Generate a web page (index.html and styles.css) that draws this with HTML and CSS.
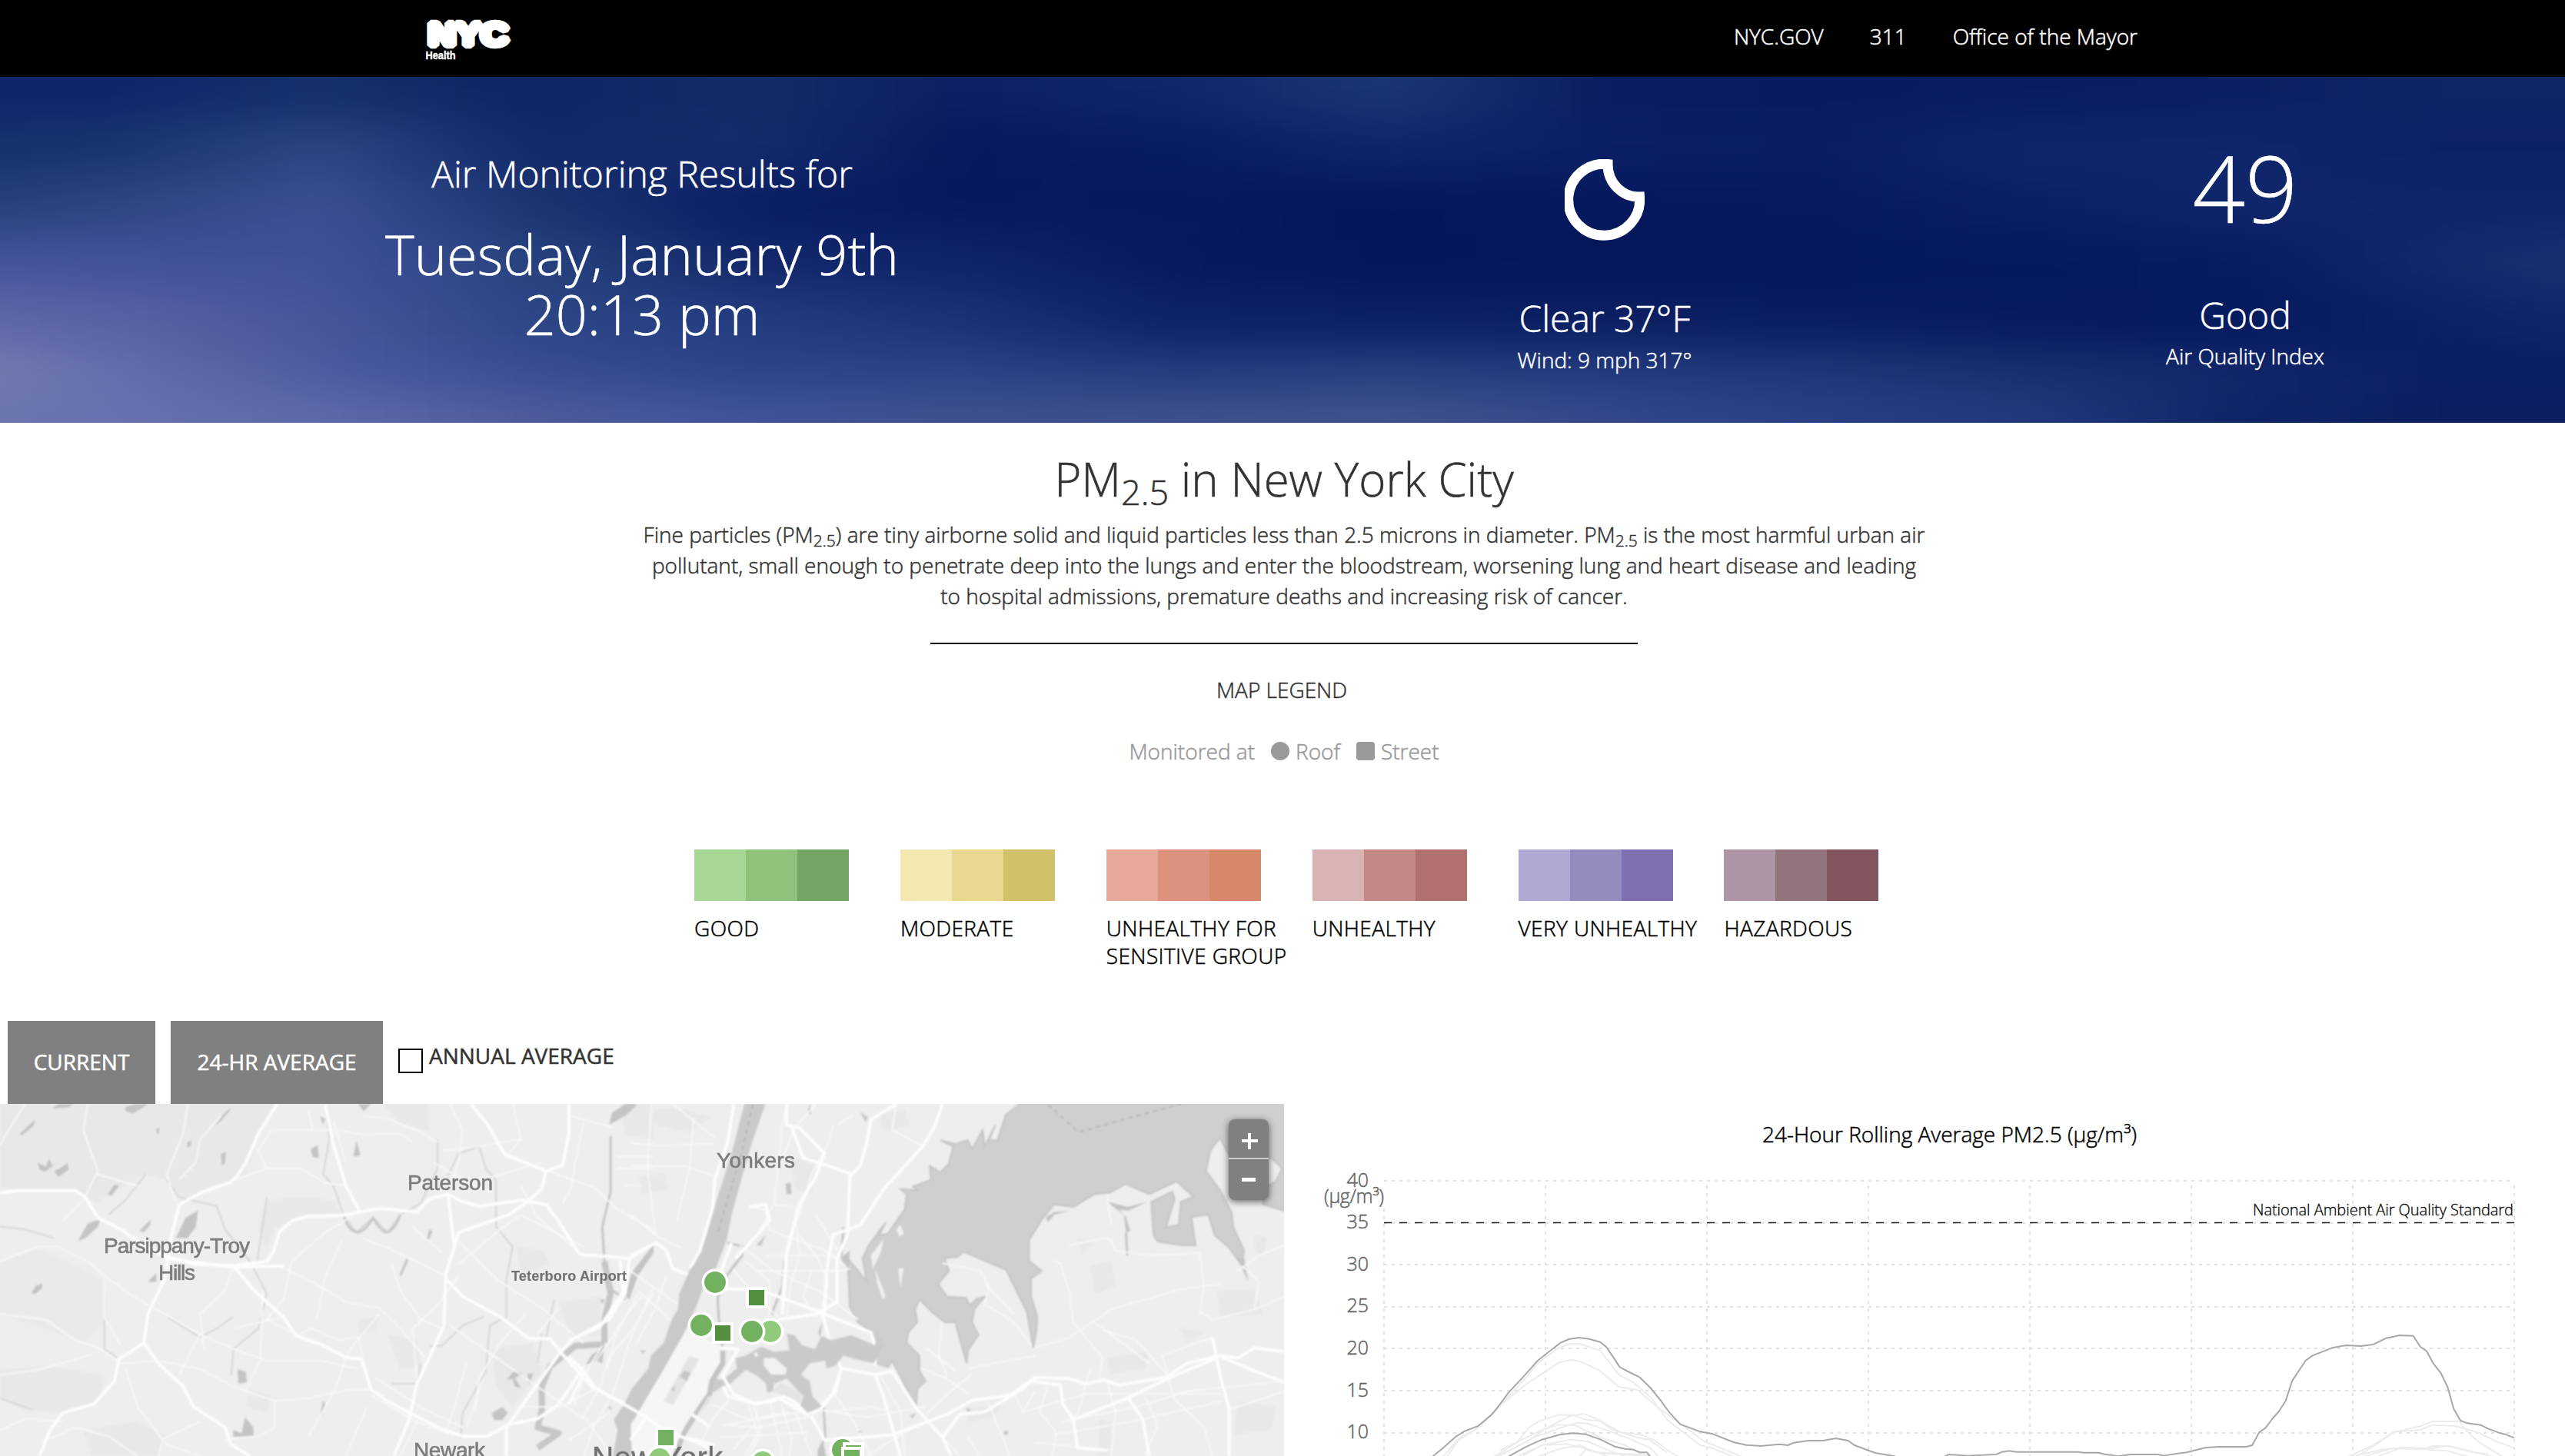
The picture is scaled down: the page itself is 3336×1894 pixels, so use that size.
FILE: index.html
```html
<!DOCTYPE html>
<html lang="en">
<head>
<meta charset="utf-8">
<title>NYC Air Monitoring</title>
<link rel="stylesheet" href="styles.css">
</head>
<body>
<header class="topbar">
  <svg class="logo" viewBox="0 0 116 60" width="116" height="60" aria-label="NYC Health">
    <text class="logo-mark" x="4" y="37.500" textLength="104" lengthAdjust="spacingAndGlyphs">NYC</text>
    <text class="logo-sub" x="0.500" y="55.500" textLength="39" lengthAdjust="spacingAndGlyphs">Health</text>
  </svg>
  <nav class="nav"><a>NYC.GOV</a><a>311</a><a>Office of the Mayor</a></nav>
</header>

<section class="hero">
  <div class="sky">
    <div class="band b1"></div><div class="band b2"></div><div class="band b3"></div><div class="band b4"></div>
    <div class="band b5"></div><div class="band b6"></div><div class="band b7"></div>
  </div>
  <div class="col date">
    <p class="lead">Air Monitoring Results for</p>
    <p class="when">Tuesday, January 9th<br>20:13 pm</p>
  </div>
  <div class="col weather">
    <svg class="moon" viewBox="0 0 104 106" width="104" height="106"><path d="M56 6.500A46.500 46.500 0 1 0 97.500 49C76 50 56 32 56 6.500Z" fill="none" stroke="#fff" stroke-width="13"/></svg>
    <p class="lead">Clear 37°F</p>
    <p class="small">Wind: 9 mph 317°</p>
  </div>
  <div class="col aqi">
    <p class="index">49</p>
    <p class="lead">Good</p>
    <p class="small">Air Quality Index</p>
  </div>
</section>

<main>
  <section class="intro">
    <h1>PM<sub>2.5</sub> in New York City</h1>
    <p class="about">Fine particles (PM<sub>2.5</sub>) are tiny airborne solid and liquid particles less than 2.5 microns in diameter. PM<sub>2.5</sub> is the most harmful urban air<br>pollutant, small enough to penetrate deep into the lungs and enter the bloodstream, worsening lung and heart disease and leading<br>to hospital admissions, premature deaths and increasing risk of cancer.</p>
    <hr>
    <p class="legend-title">MAP LEGEND</p>
    <p class="sites"><span class="at">Monitored at</span><i class="dot"></i><span class="roof">Roof</span><i class="sq"></i><span>Street</span></p>
  </section>

  <section class="scale">
    <div class="level good"><div class="sw"><i></i><i></i><i></i></div><p>GOOD</p></div>
    <div class="level moderate"><div class="sw"><i></i><i></i><i></i></div><p>MODERATE</p></div>
    <div class="level sensitive"><div class="sw"><i></i><i></i><i></i></div><p>UNHEALTHY FOR<br>SENSITIVE GROUP</p></div>
    <div class="level unhealthy"><div class="sw"><i></i><i></i><i></i></div><p>UNHEALTHY</p></div>
    <div class="level very"><div class="sw"><i></i><i></i><i></i></div><p>VERY UNHEALTHY</p></div>
    <div class="level hazard"><div class="sw"><i></i><i></i><i></i></div><p>HAZARDOUS</p></div>
  </section>

  <section class="tabs">
    <button class="tab current">CURRENT</button>
    <button class="tab day">24-HR AVERAGE</button>
    <label class="annual"><i class="box"></i><span>ANNUAL AVERAGE</span></label>
  </section>

  <section class="panels">
    <div class="map">
      <svg viewBox="0 1436 1670 458" width="1670" height="458">
        <defs>
          <pattern id="grid" width="9" height="9" patternUnits="userSpaceOnUse" patternTransform="rotate(30)"><rect width="9" height="9" fill="#efefef"/><path d="M0 0H9M0 0V9" stroke="#fff" stroke-width="4"/></pattern>
          <filter id="soft" x="-5%" y="-5%" width="110%" height="110%"><feGaussianBlur stdDeviation="0.900"/></filter>
        </defs>
        <rect x="0" y="1436" width="1670" height="458" fill="#eeeeee"/>
        <g filter="url(#soft)">
        <!-- west side: New Jersey -->
        <g transform="translate(0 1300) scale(.5421 .3788)">
          <g class="park">
            <path d="M0 350H660L620 460L600 560L540 620L440 690L400 620L350 600L300 640L230 700L180 650L0 650Z"/>
            <path d="M640 690L720 680L800 690L820 740L720 740L660 790L640 860L620 790Z"/>
            <path d="M0 900L80 850L160 900L250 960L260 1100L200 1180L60 1110L0 1080Z" opacity=".6"/>
            <path d="M0 1270L120 1260L250 1290L240 1380L150 1420L60 1410L0 1370Z"/>
            <path d="M920 360H1030V450L960 430Z"/><path d="M480 560L560 540L600 600L540 640Z"/>
            <path d="M1340 1040L1440 1020V1150L1370 1160Z"/><path d="M1180 1200L1280 1180L1300 1280L1230 1400L1190 1330Z"/>
            <path d="M930 1150L1000 1170L1010 1260L960 1270Z"/><path d="M1240 850L1300 860L1320 910L1250 950Z"/>
            <path d="M600 1340L650 1360L640 1420L590 1400Z"/><path d="M860 1100L910 1090L900 1140L860 1150Z"/>
            <path d="M200 1480L330 1450L400 1500L380 1568H220Z"/><path d="M1490 360H1568V480L1500 470Z"/>
          </g>
          <g fill="#c4c4c4">
            <path d="M300 370L325 360H355L320 392L302 385Z"/><path d="M125 375L140 360H175L165 370Z"/><path d="M47 462L85 412L80 435L52 468Z"/>
            <path d="M90 560L110 575L118 545L125 570L138 560L108 592L95 585Z"/><path d="M130 590L150 575L162 560L165 585L140 610Z"/>
            <path d="M258 670L275 635L285 640L268 675Z"/><path d="M422 820L445 750L475 725L470 780L450 820Z"/>
            <path d="M187 830L210 770L240 755L235 780L205 820Z"/><path d="M335 795L362 755L360 775L345 800Z"/>
            <path d="M530 530L542 525L540 560L532 570Z"/><path d="M450 490L460 485L457 505L448 508Z"/><path d="M515 435L535 395L555 370L550 385L525 425Z"/>
            <path d="M848 540L855 485L865 535Z"/><path d="M745 515L762 500L765 545L750 540Z"/><path d="M768 402L780 410L775 430Z"/>
            <path d="M75 1010L85 985L100 975L102 990L85 1012Z"/><path d="M355 970L375 940V970Z"/>
            <path d="M958 948L975 890L980 895L963 950Z"/><path d="M1024 825L1030 790L1038 795L1028 828Z"/>
            <path d="M570 1270L590 1280L592 1315L572 1320Z"/><path d="M560 1480L580 1490L588 1435L608 1470V1500L560 1502Z"/>
            <path d="M768 1425L775 1380L780 1385L773 1428Z"/><path d="M1215 1305L1235 1275L1255 1285L1235 1300L1250 1335L1235 1330L1230 1305Z"/>
            <path d="M1180 1420L1205 1400L1218 1420L1205 1445H1185Z"/><path d="M1462 430L1468 390L1500 360H1530L1500 400Z"/>
            <path d="M860 360H890L872 385Z"/><path d="M1405 1255L1420 1220L1450 1190L1445 1250L1430 1240Z"/><path d="M375 445L382 440V460L376 462Z"/>
            <path d="M1265 1285H1280L1270 1320Z"/><path d="M1500 1020L1515 940L1568 840V870L1530 950L1510 1030Z"/>
          </g>
          <g class="stream">
            <path d="M1050 480V580L1010 700L960 740L930 800L895 750L855 800L825 745L800 640L775 600L790 480L780 360"/>
            <path class="wide" d="M960 740Q945 800 925 800Q910 790 895 750Q875 800 855 800Q835 790 825 745"/>
            <path d="M1075 605L1100 530L1150 505L1165 580L1190 620V780L1230 850L1215 960V1090L1175 1120L1165 1280L1110 1420L1105 1510"/>
            <path class="wide" d="M1465 470V660L1445 780L1450 900L1470 1000L1500 1030"/>
            <path class="wider" d="M1450 1180V1100L1465 1010L1450 900M1450 1185L1380 1190L1320 1260L1300 1330V1410L1290 1470L1340 1490L1290 1540"/>
            <path d="M350 600L300 690L260 740M400 620L430 680L520 710L540 790L600 900L640 1010L620 1130L560 1200L555 1290"/>
            <path d="M640 680L630 780L615 920M250 1100V1200L280 1230M0 780L60 790L130 820M400 1090L480 1160L520 1130L560 1090"/>
            <path d="M1160 1090L1110 1120L1060 1190L1030 1190M1310 1160L1330 1030M1290 1250L1300 1150M0 1370L80 1410M940 1320H1000L1010 1250"/>
          </g>
          <g class="street">
            <path d="M210 360L200 450L235 590L200 690L150 760M450 360L440 460L400 600L420 690M530 400L480 480L470 560L430 620"/>
            <path d="M0 900L90 850L140 850L210 900L270 970L320 1020L430 1110L480 1150L560 1200L640 1240L770 1240L860 1270"/>
            <path d="M0 1080L110 1100L180 1170L240 1200L290 1250L380 1240L480 1270L560 1330L660 1380L740 1370L840 1340L890 1340"/>
            <path d="M0 1290L100 1270L220 1220M300 1260L330 1400L400 1530L480 1568M480 1150L430 1290"/>
            <path d="M650 450H820L870 465L960 460L990 490M650 450L620 520L640 580L720 580L780 630L830 640M740 380L750 450M800 420L830 560"/>
            <path d="M870 400L930 410L1000 450L1050 490M1060 520L1170 500L1250 480M1180 610L1300 560M1040 560L1110 620L1180 660"/>
            <path d="M710 1150L640 1100L680 1030L700 900L780 800L850 740M660 910L750 970L830 1040L910 1060L960 1130L1020 1230"/>
            <path d="M560 920L540 1000L480 1080L490 1200M630 1000L625 1240L590 1340M700 1160L750 1130L810 1170L860 1160L870 1220"/>
            <path d="M870 820L940 860L1000 900L1070 950M1100 830L1150 900L1200 970L1300 1060L1400 1180M1100 910L1200 790L1250 740L1400 850"/>
            <path d="M1210 540L1320 590L1430 650L1480 720L1568 790M1250 640L1290 750L1400 880M1400 420L1380 560L1370 650L1350 700"/>
            <path d="M1370 400L1470 440M1230 360L1250 480L1220 530M1080 360L1110 450L1100 560L1080 650M1480 540H1568M1480 580H1568M1500 640H1568"/>
            <path d="M1100 950L1050 1050L990 1130L1000 1300M1080 1120L1180 1220L1280 1320L1400 1440M910 1080L840 1200L800 1350L740 1500"/>
            <path d="M890 1360L1000 1450L1090 1500M900 1300L1010 1400L1110 1470M880 1400L830 1568M1000 1450L960 1568M660 1380V1470L620 1500L540 1510"/>
            <path d="M380 1568L390 1510L480 1450M0 1480L60 1440L150 1450M100 1520L180 1470L260 1500L330 1568M680 1090L560 1130M230 600L330 640"/>
            <path d="M1568 1010L1520 1130L1460 1230L1440 1330L1400 1430M1530 1010L1490 1120L1430 1240M1400 1430L1470 1568M1440 1330L1340 1400L1240 1400"/>
            <path d="M940 910L960 1000L1010 1100L1060 1130M820 830L780 950L760 1100M990 780L1060 870M1120 1240L1090 1400L1070 1480M1160 1300L1120 1470"/>
            <path d="M60 360L20 450L0 500M250 960V1090L290 1190M530 640L600 600L640 580M1260 1080L1200 1180L1150 1300L1140 1420M1340 1060L1290 1150"/>
          </g>
          <g class="road">
            <path d="M0 665L40 657H180L205 680L235 750L290 790L350 850L400 885L470 910L560 915L640 900L655 870L670 800L700 760L740 745L820 742L910 718L1000 730L1030 685L1075 670L1110 695L1150 710L1250 690L1310 705L1340 760L1390 875L1510 890L1568 840"/>
            <path d="M665 360L620 460L590 560L570 605L550 630L480 665L430 705L410 820L395 960L355 1080L345 1180L285 1235L275 1310L225 1390L150 1420L120 1480L95 1568"/>
            <path d="M345 1180L380 1250L440 1330L465 1400L540 1470L555 1530L600 1568"/>
            <path d="M560 915L610 1000L680 1090L710 1155L770 1185L830 1230L868 1235L890 1340L930 1380L1050 1470L1110 1500L1170 1500L1220 1460L1290 1440L1340 1390L1370 1330L1400 1260"/>
            <path d="M780 360L800 500L830 640L865 735"/>
            <path d="M1130 360L1170 430L1210 530L1310 590L1350 570L1365 460V360"/>
            <path d="M1310 590L1300 650L1270 690L1220 740L1100 800L1090 850L1070 940L1065 1120L1030 1230L1000 1320L980 1450L945 1568M1075 670L1090 850"/>
            <path d="M1070 960L1110 1020L1200 1090L1270 1165L1320 1165L1350 1220L1420 1330L1568 1440"/>
            <path d="M1510 890L1500 1010L1460 1100L1370 1170L1340 1220L1260 1380L1215 1470V1568M400 890L560 920L680 915"/>
          </g>
        </g>
        <!-- east side: Hudson, Bronx, Long Island Sound -->
        <g transform="translate(820 1420) scale(.5485 .3333)">
          <g class="park">
            <path d="M20 80L100 60L190 100L140 160L60 130Z"/><path d="M20 330L80 320L90 380L30 400Z"/><path d="M380 260L440 270L430 400L390 380Z"/>
            <path d="M590 90L650 70L660 130L600 160Z"/><path d="M1090 680L1140 660L1150 760L1100 790Z"/><path d="M1390 780L1480 770L1500 870L1400 880Z"/>
            <path d="M1130 1040L1230 1010L1220 1080L1140 1100Z"/><path d="M1440 1210L1530 1230L1520 1320L1430 1340Z"/><path d="M1300 920L1360 940L1320 980Z"/>
            <path d="M1110 1280L1140 1290V1422H1110Z"/><path d="M1060 570L1100 590L1070 640Z"/><path d="M800 1240L880 1220L860 1270L800 1290Z"/><path d="M1480 560L1510 570L1500 640L1480 620Z"/>
          </g>
          <path fill="#cacaca" d="M270 48L240 240L205 420L180 560L145 700L130 760L200 760L200 700L228 580L240 480L265 330L290 190L320 48Z"/>
          <path fill="#cfcfcf" stroke="#c4c4c4" stroke-width="2" vector-effect="non-scaling-stroke" d="M930 40L890 90L870 190L850 190L865 130L840 215L835 150L810 225L800 190L770 205L735 190L765 215L755 280L735 315L710 290L712 345L670 370L680 385L640 380L655 400L650 460L610 555L590 560L605 510L565 600L550 650L560 740L530 680L515 650L520 840L540 900L565 930L580 990V1060L610 1075L620 1050L640 1110L660 1180L678 1220L680 1160L700 1130L685 1090V1030L655 980L658 940L680 900L675 850L685 810L715 860L745 900L770 900L780 960L797 1060L800 1010L825 950L810 900L815 850L840 800L820 810L805 835L795 805L750 800L730 750L755 700L745 650L775 645L790 625L840 660L890 695L910 760L940 860L955 1000L962 940L965 880L950 800V730L975 700L945 660V580L975 500L1005 440L1050 450L1100 400L1135 395L1175 360L1230 400L1295 350L1335 410L1305 430L1300 520L1270 530L1290 420L1285 390L1235 430L1240 560L1250 585L1310 600L1340 600L1330 490L1370 480L1385 560L1420 610L1450 680L1455 620L1430 530L1425 470L1400 390L1365 310L1375 230L1398 180L1420 250L1520 260L1545 300L1530 350L1500 380L1500 440L1560 470V40Z"/>
          <path fill="#c4c4c4" d="M1225 430L1180 465L1160 460L1175 490L1185 545L1175 550L1170 480L1130 430L1180 450ZM990 510L1005 480L1040 465L1005 470L985 490ZM368 360L380 355L382 400L370 400ZM298 600L320 560L310 600ZM545 80L562 100L558 120ZM1440 650L1455 650L1465 740L1450 690ZM425 48L428 90L420 80ZM505 640L520 620L518 680H505ZM445 940L455 900L450 960ZM795 1235L810 1240L800 1250ZM885 1325H895V1338H885Z"/>
          <path fill="#f0f0f0" d="M630 540L640 520L648 555L638 565ZM570 640L600 575L595 620L575 690ZM580 690L605 800L598 812L585 750ZM635 690L648 690L640 765Z"/>
          <g class="ferry"><path d="M290 50L265 230L205 560"/><path d="M990 50L1062 158L1310 45"/></g>
          <g class="stream"><path class="wide" d="M230 590L268 605L265 640L240 690M505 530L500 640L510 680M458 1230L462 1350L450 1390L460 1422M1175 550L1178 640M365 660L360 760L335 870"/></g>
          <g class="street">
            <path d="M0 200L60 210L200 205M100 48L200 180M50 48L40 300L60 560M150 100L140 300L110 500M0 290L130 290L200 330M0 480L60 560L120 610M0 700L130 850M20 780L100 900"/>
            <path d="M440 48L390 140L350 300L340 440L300 560L250 650M370 48L360 130L350 300M480 130L470 200L430 320L400 480L370 600L360 780M530 90L490 130M630 48L620 150L690 210"/>
            <path d="M340 440L390 450L400 640L380 760L370 880M280 450L320 460L330 540L460 620L510 680M300 700H500L520 690M320 640L500 640M240 690L300 800L350 880"/>
            <path d="M260 600L340 700L450 780L540 890M400 560L440 640L470 740L450 860M440 480L490 620M210 770H300L400 830M270 660L330 740L330 870M430 700L410 800L430 860"/>
            <path d="M740 670L830 700L850 760L840 830L910 900L950 990M1000 660L1020 670L1040 780L1050 900L1080 960M960 1000L1040 960L1140 850L1310 770L1400 750"/>
            <path d="M1140 570L1150 620L1230 640L1350 630M1040 600L1130 570L1150 610M1350 630L1360 760L1350 860L1380 890L1480 850L1550 800M1450 680L1490 740L1480 850"/>
            <path d="M800 1080L960 1030M810 1100L760 1170L700 1260M690 1080L750 1120L800 1180M740 900L730 1020L750 1110M1080 960L1120 1040L1110 1130M1120 930L1200 970L1270 1100"/>
            <path d="M990 1150L970 1250L1010 1330L1000 1422M1090 1080L1060 1260L1040 1280M1130 1130L1150 1250L1140 1422M1270 1100L1290 1200L1360 1310L1380 1422M1220 1190L1250 1300L1220 1422"/>
            <path d="M1020 1290L1200 1230L1320 1170L1550 1130M930 1250L1080 1180H1400M1000 1340L1180 1290L1400 1210M1420 1240L1550 1170M700 1290L640 1340L560 1422M850 1220L900 1422M910 1170L930 1250L960 1170"/>
            <path d="M290 1220L310 1310L270 1422M330 1200L360 1422M380 1200L430 1422M230 1300L440 1240L560 1270L700 1230M210 1350L420 1330M480 1170L530 1290L570 1422M590 1100L640 1250L650 1422"/>
            <path d="M720 1310L780 1422M960 1370L1140 1400M800 1350L830 1422M1380 960L1260 1030L1280 1130M1130 400L1140 520M840 750L910 870M1100 900L1230 1060M700 1000L770 1090M1550 600L1490 640L1440 700"/>
          </g>
          <g class="road">
            <path d="M245 48L230 200L200 340L195 450L165 620L140 690M370 48V130L400 140L460 240L440 330L400 440L370 640L360 870"/>
            <path d="M630 48L570 110L560 200L545 290L520 330L515 560L490 650L490 820L450 860M380 130L410 260L470 290L520 320M740 48L720 140L690 220L600 380L545 520L480 560L465 700L460 860"/>
            <path d="M0 640L60 590L85 620L100 690L170 735M200 770H300L450 860M350 890L455 865L540 920L570 940L580 990V1070M455 865L470 960L500 1080L580 1105L620 1090L680 1240L740 1350L760 1422"/>
            <path d="M500 1080L480 1180L430 1260L350 1195L300 1220L230 1190L215 1130M350 1195L430 1270L460 1360L500 1355L620 1340L750 1260L810 1205L900 1185L960 1115L1040 1120L1080 1140L1120 1125L1160 1145L1270 1115L1320 1060L1400 1030L1440 1040L1480 1000L1550 1015"/>
            <path d="M1400 1035L1480 1090L1550 1135M1380 960L1400 1120L1420 1240V1422M740 1350L780 1260L840 1250L930 1160L950 1130L1020 1145L1025 1220L1050 1280L1180 1195L1280 1115L1390 1040M1180 1195L1215 1280L1230 1422M1050 1280L1060 1390L1130 1400"/>
            <path d="M0 1240L60 1300L130 1350L200 1380M240 590L215 700L200 770"/>
            <path d="M580 1105L600 1190L640 1422M280 450L320 440L330 500L300 560L250 650"/>
          </g>
        </g>
        <!-- Manhattan and the East River -->
        <g transform="translate(740 1640) scale(.33333)">
          <path fill="#c9c9c9" d="M482 20L470 40L430 130L425 190L400 230L370 320L320 370L310 420L245 500L215 560L175 620L190 660L170 770H245L240 640L260 610L300 540L360 440L440 300L460 260L500 170L540 60L570 0Z"/>
          <path fill="url(#grid)" d="M470 260L590 340L600 400L540 470V520L450 640L410 770H248L244 640L262 610L302 540L362 440L440 300Z"/>
          <path fill="#e4e4e4" d="M470 370L508 385L405 565L370 548Z"/>
          <path fill="#c6c6c6" d="M432 450L450 430L475 435L460 470ZM400 505L412 485V512Z"/>
          <path fill="#cacaca" d="M1200 280L1195 330L1100 290L1025 310L985 295L960 345L910 330L880 290L850 285L860 350L800 355L750 335L690 370L650 380L655 420L600 465L570 460L560 515L600 490L630 480L690 425L735 450L770 480L772 515L795 510L800 480L850 460L915 530L900 570L940 605L990 570L950 530L940 470L905 445L940 400L1000 390L1005 420L1040 410L1070 370L1120 385L1190 400L1230 330Z"/>
          <path fill="#f0f0f0" d="M760 380L800 378L850 420L845 445L790 445L760 410ZM722 360L732 355L738 370L728 378Z"/>
          <path fill="#e4e4e4" d="M790 510L830 475L915 525L905 555L850 530Z"/>
          <path d="M600 350V400L560 465L548 520L500 590L450 670L410 770" fill="none" stroke="#c4c4c4" stroke-width="20"/>
          <path d="M545 540L490 620M660 0L600 80L580 150L585 230L600 340" fill="none" stroke="#c4c4c4" stroke-width="9"/>
          <path d="M548 530L500 610" fill="none" stroke="#f0f0f0" stroke-width="6"/>
          <path fill="#c4c4c4" d="M970 740L990 700L1005 770H970ZM120 152L140 150L130 170ZM275 350H300L290 362ZM150 570H165V582ZM1330 605L1355 595L1340 615ZM1125 665H1145L1135 672Z"/>
          <g class="road"><path d="M0 375L60 435L100 495L215 560L300 610L370 660M200 0L212 120L120 260L0 310M60 435L0 560M590 340L660 345L600 450L640 520L720 555L790 550L840 530L880 550L930 600L980 580L1040 510L1060 430M300 610L240 700M420 680L500 710L560 740M480 600L550 650"/></g>
          <g class="street"><path d="M130 330L70 430L20 560M330 100L230 330L180 500L100 640L60 762M280 140L190 260L150 420M0 700L90 640L160 590M380 60L330 200L260 330M700 560L740 690L700 762M740 570L720 640L640 740M560 560L700 620L860 590M830 560L870 700L860 762M600 640L740 650L930 610M640 520L560 620L520 700M1000 590L1180 570L1260 590"/></g>
        </g>
        </g>
        <g class="place">
          <text x="530" y="1548" textLength="111">Paterson</text>
          <text x="135" y="1630" textLength="190">Parsippany-Troy</text>
          <text x="206" y="1665" textLength="48">Hills</text>
          <text x="932" y="1519" textLength="102">Yonkers</text>
          <text x="538" y="1896" textLength="93">Newark</text>
          <text class="airport" x="665" y="1666" textLength="150">Teterboro Airport</text>
          <text class="city" x="770" y="1909" textLength="170">New York</text>
        </g>
        <g stroke="#fff" stroke-width="3.500">
          <circle class="lo" cx="1002" cy="1732" r="15.700"/><circle class="mid" cx="978" cy="1732" r="15.700"/>
          <circle class="mid" cx="930" cy="1668" r="15.700"/><circle class="mid" cx="912" cy="1724" r="15.700"/>
          <circle class="lo" cx="858" cy="1898" r="15.700"/><circle class="lo" cx="992" cy="1902" r="15.700"/><circle class="mid" cx="1096" cy="1886" r="15.700"/>
        </g>
        <g stroke="#fff" stroke-width="4">
          <rect class="hi" x="972" y="1676" width="24" height="24"/><rect class="hi" x="928" y="1722" width="24" height="24"/>
          <rect class="mid" x="854" y="1858" width="24" height="24"/><rect class="mid" x="1098" y="1878" width="24" height="24"/><rect class="mid" x="1096" y="1884" width="24" height="24"/>
        </g>
      </svg>
      <div class="zoom"><b class="plus"></b><b class="minus"></b></div>
    </div>

    <svg class="chart" viewBox="1670 1436 1666 458" width="1666" height="458">
      <text class="chart-title" x="2292" y="1486" textLength="487">24-Hour Rolling Average PM2.5 (µg/m³)</text>
      <g class="gh"><path d="M1800 1536H3266M1800 1591H3266M1800 1645H3266M1800 1700H3266M1800 1754H3266M1800 1809H3266M1800 1864H3266"/></g>
      <g class="gv"><path d="M1800 1572V1894M2010 1542V1894M2220 1542V1894M2430 1542V1894M2640 1542V1894M2850 1542V1894M3060 1542V1894M3270 1542V1894"/></g>
      <path d="M1800 1590.500H3270" stroke="#222" stroke-width="1.500" stroke-dasharray="10 10"/>
      <g class="axis">
        <text x="1780" y="1544">40</text><text x="1780" y="1598">35</text><text x="1780" y="1653">30</text><text x="1780" y="1707">25</text><text x="1780" y="1762">20</text><text x="1780" y="1817">15</text><text x="1780" y="1871">10</text>
        <text x="1800" y="1565" textLength="78">(µg/m³)</text>
      </g>
      <text class="naaqs" x="2930" y="1580.500" textLength="339">National Ambient Air Quality Standard</text>
      <g class="line" transform="translate(1680 1430) scale(.5421 .33333)">
        <g class="faint">
          <path d="M360 1400L400 1325L450 1280L490 1210L560 1090L590 1030L640 970L665 954L690 954L740 980L785 1075L820 1105L865 1170L900 1250L980 1350L1010 1362L1060 1395"/>
          <path d="M370 1400L400 1330L445 1285L500 1195L560 1115L640 1028L672 1016L700 1028L738 1058L785 1122L830 1135L880 1205L940 1275L990 1335L1080 1395"/>
          <path d="M480 1400L540 1340L570 1280L595 1255L640 1232H675L705 1250L740 1255L790 1300L840 1310L870 1330L910 1380L930 1395"/>
          <path d="M490 1395L560 1340L620 1275L670 1235L700 1228L730 1245L770 1290L830 1320L860 1330L900 1378"/>
          <path d="M500 1390L580 1320L640 1285L685 1262L710 1265L770 1300L810 1325L860 1360L880 1395"/>
          <path d="M500 1370L600 1290L640 1270L680 1272L740 1320L800 1350L850 1395"/>
          <path d="M540 1395L600 1350L670 1328L710 1335L760 1370L800 1395M590 1395L640 1365L690 1350L730 1378L860 1388M690 1395L705 1368L740 1380L870 1395M555 1390L600 1350L660 1345L720 1370L760 1395"/>
        </g>
        <path d="M338 1394L360 1365L395 1315L415 1295L447 1275L480 1230L495 1200L520 1145L560 1075L590 1020L625 975L645 950L665 936L690 930L715 936L740 947L755 967L775 1015L787 1045L810 1065L835 1085L860 1125L885 1175L905 1220L932 1268L980 1297L1010 1306L1060 1338L1090 1349L1125 1353L1170 1346L1190 1350L1205 1340L1240 1332H1275L1305 1323L1335 1332L1350 1350L1400 1380L1450 1394"/>
        <path d="M520 1394L560 1358L600 1328L645 1308L675 1303L705 1307L740 1327L775 1355L800 1364L820 1367L835 1378H852L860 1394"/>
      </g>
      <g class="line" transform="translate(2500 1430) scale(.5332 .33333)">
        <g class="faint">
          <path d="M1040 1394L1100 1350L1150 1300L1215 1276L1245 1257H1310L1325 1290L1360 1340L1415 1394"/>
          <path d="M1060 1394L1100 1355L1150 1298L1215 1290L1245 1271L1300 1275L1360 1303L1400 1335L1444 1360"/>
          <path d="M1075 1394L1150 1362L1220 1366L1280 1372L1330 1394M1110 1394L1165 1363L1225 1365L1245 1353L1285 1353L1330 1370L1390 1394M1050 1394L1125 1366L1180 1358L1240 1363L1280 1352L1350 1380L1380 1382"/>
        </g>
        <path d="M55 1394L65 1386L110 1391L180 1386L195 1376L212 1372L230 1376H380L395 1379H430L445 1385L478 1393L508 1386H575L590 1391L620 1383L645 1378L690 1360L720 1356H790L805 1350L822 1300L837 1283L855 1245L870 1218L887 1175L902 1100L935 1020L952 1000L1000 970L1035 960L1070 963L1100 957L1132 932L1165 921L1198 923L1215 966L1230 982L1247 1032L1265 1068L1282 1125L1296 1207L1313 1254L1330 1264L1362 1271L1380 1285L1410 1303L1425 1309L1444 1321"/>
      </g>
    </svg>
  </section>
</main>
</body>
</html>
```
FILE: styles.css
```css
* { box-sizing: border-box; }
body { margin: 0; width: 3336px; height: 1894px; overflow: hidden; background: #fff; color: #333; font: 300 28px/40px "Open Sans", sans-serif; -webkit-text-stroke-width: .5px; }
p, h1 { margin: 0; font-weight: 300; }
sub { font-size: 75%; line-height: 0; position: relative; bottom: -.25em; vertical-align: baseline; }

.topbar { height: 100px; padding: 0 556px 4px 553px; border-bottom: 2px solid #090909; background: #000; display: flex; align-items: center; justify-content: space-between; }
.logo { align-self: flex-start; margin-top: 21px; -webkit-text-stroke-width: 0; }
.logo-mark { font: bold 42px "Liberation Sans", sans-serif; fill: #fff; stroke: #fff; stroke-width: 8.5px; stroke-linejoin: bevel; }
.logo-sub { font: bold 14px "Liberation Sans", sans-serif; fill: #fff; stroke: #fff; stroke-width: .4px; }
.nav { display: flex; gap: 60px; color: #fff; }

.hero { position: relative; height: 450px; overflow: hidden; display: grid; grid-template-columns: 1670px 834px 832px; color: #fff; text-align: center; }
.sky { position: absolute; inset: -100px -139px; filter: blur(26px); }
.band { height: 74px; }
.b1 { height: 157px; background: linear-gradient(90deg, #10256a, #10256a, #14306c, #0f2465, #142c6a, #0c1f62, #10276a, #1b3674, #0a1d60, #091b60, #091c60, #0b1f62, #0f2565, #0f2565); }
.b2 { background: linear-gradient(90deg, #14306c, #183570, #2c4684, #13296a, #152c6c, #07195c, #081c60, #10256a, #0b1f64, #0a1d62, #10266a, #10266a, #0c2064, #0c2064); }
.b3 { background: linear-gradient(90deg, #1f3d78, #2f4583, #3c4f92, #1b3572, #0a1e64, #07195e, #061860, #041659, #05185c, #071a5e, #0b1f64, #10266a, #10256a, #10256a); }
.b4 { background: linear-gradient(90deg, #4a569c, #43529a, #40509a, #28437f, #14296b, #10246a, #081a5e, #041659, #04175b, #04175b, #051a5e, #081c60, #132b6c, #1a3775); }
.b5 { background: linear-gradient(90deg, #626aaa, #5a62a6, #485599, #2d4686, #243d80, #1a3375, #0e2266, #0c2064, #0b1f62, #0a1d62, #071a5e, #061a5e, #0c2266, #132b6c); }
.b6 { height: 60px; background: linear-gradient(90deg, #8088b0, #6670ac, #4c5ba0, #3b4c92, #2c4588, #2a4486, #243c7e, #24407f, #233c7e, #1e3878, #18306f, #12286a, #0a1e62, #0a1e62); }
.b7 { height: 138px; background: linear-gradient(90deg, #6c76ae, #6872ae, #5e6aac, #4f5b9d, #42549a, #3f508f, #40508f, #43528f, #35488c, #2a4086, #23397c, #0f2466, #0a1e60, #0a1e60); }
.col { position: relative; display: flex; flex-direction: column; align-items: center; }
.lead { font-size: 48px; line-height: 60px; }
.small { margin-top: 4px; }
.date { padding-top: 96px; }
.when { margin-top: 35px; font-size: 72px; line-height: 78px; }
.weather { padding-top: 107px; }
.moon { margin-bottom: 71px; }
.index { margin: 84px 0 76px; font-size: 120px; line-height: 120px; }
.aqi .small { margin-top: 3px; }

.intro { padding-top: 31px; width: 3340px; text-align: center; }
.intro h1 { font-size: 60px; line-height: 84px; }
.about { margin-top: 10px; }
.intro hr { width: 920px; height: 2px; margin: 41px auto 39px; border: 0; background: #000; }
.legend-title { padding-right: 6px; }
.sites { margin-top: 40px; display: flex; justify-content: center; align-items: center; color: #999; }
.dot, .sq { width: 24px; height: 24px; background: #999; margin-right: 8px; }
.dot { border-radius: 50%; margin-left: 21px; }
.sq { border-radius: 4px; margin-left: 21px; }

.scale { margin: 108px 0 0 903px; display: flex; color: #000; }
.level { width: 267.900px; height: 157px; white-space: nowrap; line-height: 36px; letter-spacing: .4px; }
.sw { display: grid; grid-template-columns: repeat(3, 67px); height: 67px; margin-bottom: 17px; }
.good i:nth-child(1) { background: #a8d795; } .good i:nth-child(2) { background: #90c27c; } .good i:nth-child(3) { background: #75a565; }
.moderate i:nth-child(1) { background: #f4e8b2; } .moderate i:nth-child(2) { background: #e8d890; } .moderate i:nth-child(3) { background: #d1c169; }
.sensitive i:nth-child(1) { background: #e6a899; } .sensitive i:nth-child(2) { background: #dc927c; } .sensitive i:nth-child(3) { background: #d8886a; }
.unhealthy i:nth-child(1) { background: #d9b3b3; } .unhealthy i:nth-child(2) { background: #c48986; } .unhealthy i:nth-child(3) { background: #b17170; }
.very i:nth-child(1) { background: #aea8d2; } .very i:nth-child(2) { background: #948cbf; } .very i:nth-child(3) { background: #8170b1; }
.hazard i:nth-child(1) { background: #ad95a6; } .hazard i:nth-child(2) { background: #92757d; } .hazard i:nth-child(3) { background: #82555f; }

.tabs { margin-top: 66px; padding-left: 10px; height: 108px; display: flex; gap: 20px; }
.tab { border: 0; padding: 0 0 2px; background: #808080; color: #fff; font: 400 28px/40px "Open Sans", sans-serif; -webkit-text-stroke-width: .5px; }
.current { width: 192px; }
.day { width: 276px; }
.annual { display: flex; font-weight: 400; }
.annual span { margin: 25px 0 0 8px; }
.box { width: 32px; height: 32px; margin-top: 36px; border: 2px solid #000; }

.panels { display: grid; grid-template-columns: 1670px 1666px; height: 458px; }
.panels svg { display: block; -webkit-text-stroke-width: 0; }
.map { position: relative; overflow: hidden; }
.park { fill: #e8e8e8; }
.stream path { fill: none; stroke: #cfcfcf; stroke-width: 1.500px; vector-effect: non-scaling-stroke; stroke-linejoin: round; }
.stream .wide { stroke-width: 3px; stroke: #c6c6c6; }
.stream .wider { stroke-width: 8px; stroke: #c6c6c6; }
.street path { fill: none; stroke: #f8f8f8; stroke-width: 2px; vector-effect: non-scaling-stroke; stroke-linejoin: round; }
.road path { fill: none; stroke: #fdfdfd; stroke-width: 4px; vector-effect: non-scaling-stroke; stroke-linejoin: round; }
.ferry path { fill: none; stroke: #b5b5b5; stroke-width: 2px; stroke-dasharray: 6 5; vector-effect: non-scaling-stroke; }
.place { font: 28px "Liberation Sans", Arial, sans-serif; fill: #7c7c7c; }
.place text { stroke: #7c7c7c; stroke-width: .6px; }
.place .airport { font-size: 18px; font-weight: bold; fill: #707070; stroke-width: .2px; }
.place .city { font-size: 39px; fill: #707070; }
.lo { fill: #90ca7a; } .mid { fill: #72b15f; } .hi { fill: #529040; }
.zoom { position: absolute; left: 1598px; top: 20px; width: 52px; height: 105px; border-radius: 8px; background: #808080; box-shadow: 0 2px 10px rgba(0,0,0,.6); display: grid; grid-template-rows: 52px 53px; }
.zoom b { background: linear-gradient(#fff, #fff) center/18px 5px no-repeat; }
.zoom .plus { border-bottom: 2px solid #ccc; background: linear-gradient(#fff, #fff) 17px 26px/21px 4px no-repeat, linear-gradient(#fff, #fff) 25px 18px/4px 21px no-repeat; }

.chart text { font-family: "Open Sans", sans-serif; font-weight: 300; stroke-width: .5px; }
.chart .chart-title { font-size: 28px; fill: #000; stroke: #000; }
.chart .axis text { font-size: 25px; fill: #666; stroke: #666; text-anchor: end; }
.chart .naaqs { font-size: 20px; fill: #000; stroke: #000; stroke-width: .3px; }
.gh path { stroke: #e2e2e2; stroke-width: 2px; stroke-dasharray: 4 6; }
.gv path { stroke: #e2e2e2; stroke-width: 2px; stroke-dasharray: 4 6; }
.line path { fill: none; stroke: #a8a8a8; stroke-width: 2px; vector-effect: non-scaling-stroke; stroke-linejoin: round; }
.line .faint path { stroke: #ececec; }
```
